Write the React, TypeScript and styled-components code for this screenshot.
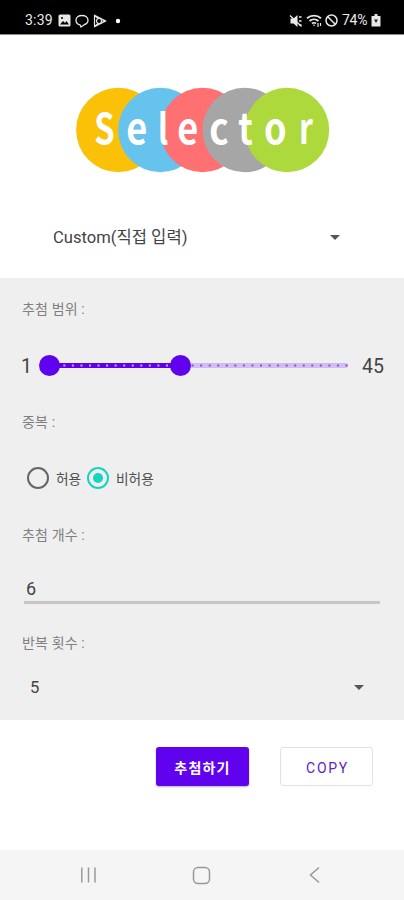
import React from "react";
import styled, { createGlobalStyle } from "styled-components";

const GlobalStyle = createGlobalStyle`
  * { box-sizing: border-box; }
  body { margin: 0; background: #fff; }
  button { font: inherit; }
`;

const Screen = styled.div`
  width: 404px;
  height: 900px;
  display: flex;
  flex-direction: column;
  background: #fff;
  color: #444;
  overflow: hidden;
  font-family: Roboto, "Noto Sans CJK KR", sans-serif;
`;

const StatusBar = styled.header`
  height: 35px;
  display: flex;
  justify-content: space-between;
  padding: 6px 23px 0 25px;
  background: #000;
  border-bottom: 1px solid #8a8a8a;
  color: #e8e8e8;
  font-size: 14px;
  font-weight: 400;
  line-height: 29px;
`;

const StatusGroup = styled.div<{ $gap: number }>`
  display: flex;
  align-items: center;
  gap: ${(p) => p.$gap}px;
  height: 29px;
  svg { display: block; }
`;

const Clock = styled.span`
  width: 29px;
  letter-spacing: 0.2px;
`;

const Battery = styled.span`
  width: 26px;
  margin-left: 1px;
  letter-spacing: -0.3px;
`;

const LogoArea = styled.div`
  height: 161px;
  display: flex;
  padding: 51px 0 0 74px;
`;

const Dropdown = styled.div<{ $height: number; $left: number; $right: number }>`
  height: ${(p) => p.$height}px;
  display: flex;
  align-items: center;
  justify-content: space-between;
  padding: 0 ${(p) => p.$right}px 0 ${(p) => p.$left}px;
  font-size: 16.6px;
`;

const DropdownText = styled.span<{ $lift?: number }>`
  padding-bottom: ${(p) => p.$lift ?? 0}px;
`;

const Caret = styled.span`
  border: 5px solid transparent;
  border-top-color: #555;
  border-bottom: 0;
`;

const Panel = styled.main`
  height: 442px;
  background: #efefef;
  display: flex;
  flex-direction: column;
`;

const Label = styled.div<{ $height: number }>`
  height: ${(p) => p.$height}px;
  padding: 0 0 2px 22px;
  display: flex;
  align-items: center;
  font-size: 14px;
  letter-spacing: 0.15px;
  color: #808080;
`;

const RangeRow = styled.div`
  height: 50px;
  display: flex;
  align-items: center;
  padding-left: 21px;
  font-size: 19.5px;
`;

const Bound = styled.span<{ $width: number }>`
  width: ${(p) => p.$width}px;
  padding-top: 2px;
`;

const Track = styled.div`
  position: relative;
  width: 300px;
  height: 5px;
  margin-right: 14px;
  border-radius: 2px;
  background: #d2bdf2;
`;

const Fill = styled.div`
  width: 132px;
  height: 5px;
  background: #6002e8;
  border-radius: 2px;
`;

const Ticks = styled.svg`
  position: absolute;
  left: 0;
  top: 0;
`;

const Thumb = styled.i`
  position: absolute;
  top: -8px;
  width: 21px;
  height: 21px;
  border-radius: 50%;
  background: #6002ee;
`;

const RadioRow = styled.div`
  height: 48px;
  display: flex;
  align-items: center;
  padding-left: 27px;
  font-size: 13.7px;
  color: #505050;
`;

const RadioDot = styled.span<{ $on?: boolean }>`
  width: 22px;
  height: 22px;
  border-radius: 50%;
  border: 2px solid ${(p) => (p.$on ? "#18d3bd" : "#666")};
  display: grid;
  place-items: center;
  &::after {
    content: "";
    width: 10px;
    height: 10px;
    border-radius: 50%;
    background: ${(p) => (p.$on ? "#18d3bd" : "transparent")};
  }
`;

const RadioText = styled.span<{ $width: number }>`
  width: ${(p) => p.$width}px;
  padding: 0 0 1px 7px;
  white-space: nowrap;
`;

const Field = styled.div`
  height: 28px;
  margin: 9px 24px 0 24px;
  padding: 0 0 0 2px;
  display: flex;
  align-items: center;
  border-bottom: 3px solid #c6c6c6;
  font-size: 18px;
`;

const Actions = styled.div`
  height: 130px;
  display: flex;
  justify-content: flex-end;
  gap: 31px;
  padding: 27px 31px 0 0;
`;

const ActionButton = styled.button<{ $filled?: boolean }>`
  width: 93px;
  height: 39px;
  padding: ${(p) => (p.$filled ? "0" : "2px 0 0 2px")};
  border-radius: 3px;
  font-size: 14px;
  font-weight: ${(p) => (p.$filled ? 700 : 400)};
  letter-spacing: ${(p) => (p.$filled ? 1.2 : 1.7)}px;
  border: ${(p) => (p.$filled ? "0" : "1px solid #e2e2e2")};
  background: ${(p) => (p.$filled ? "#6002ee" : "#fff")};
  color: ${(p) => (p.$filled ? "#fff" : "#6020cc")};
  box-shadow: ${(p) => (p.$filled ? "0 1px 2px rgba(0, 0, 0, 0.3)" : "none")};
`;

const NavBar = styled.nav`
  height: 50px;
  background: #f5f5f5;
  display: grid;
  grid-template-columns: 17px 19px 15px;
  column-gap: 95px;
  align-items: center;
  padding-left: 80px;
  svg { display: block; }
`;

const CIRCLES = [
  [118.3, "#fac108"],
  [160.3, "#66c3ee"],
  [202.5, "#ff7072"],
  [244.7, "#a6a6a6"],
  [287, "#add93d"],
] as const;

// glyph, centre x, horizontal scale
const LETTERS = [
  ["S", 104.5, 0.78],
  ["e", 136.8, 0.86],
  ["l", 163, 0.8],
  ["e", 187.8, 0.86],
  ["c", 219, 0.88],
  ["t", 245.6, 0.82],
  ["o", 275.2, 0.86],
  ["r", 306, 0.76],
] as const;

function Logo() {
  return (
    <svg width="258" height="88" viewBox="74 86 258 88" role="img" aria-label="Selector">
      {CIRCLES.map(([cx, fill]) => (
        <circle key={cx} cx={cx} cy="130" r="42.2" fill={fill} />
      ))}
      <g fill="#fff" fontFamily="Noto Sans CJK KR, sans-serif" fontWeight="700" fontSize="42" textAnchor="middle">
        {LETTERS.map(([ch, x, sx]) => (
          <text key={x} transform={`translate(${x} 143.5) scale(${sx} 1)`}>{ch}</text>
        ))}
      </g>
    </svg>
  );
}

function RangeSlider() {
  const ticks = Array.from({ length: 35 }, (_, i) => 6.8 + i * 8.55);
  return (
    <Track>
      <Fill />
      <Ticks width="300" height="5">
        {ticks.map((x) => (
          <rect key={x} x={x} y="1.5" width="2" height="2" fill={x < 132 ? "#c9a9f5" : "#8a50de"} />
        ))}
      </Ticks>
      <Thumb style={{ left: -9.5 }} />
      <Thumb style={{ left: 121.5 }} />
    </Track>
  );
}

export default function App() {
  return (
    <Screen>
      <GlobalStyle />
      <StatusBar>
        <StatusGroup $gap={4}>
          <Clock>3:39</Clock>
          <svg width="13" height="13" viewBox="0 0 13 13">
            <rect x=".5" y=".5" width="12" height="12" rx="1.5" fill="#e8e8e8" />
            <path d="M2 10.500 5 7l2 2 1.500-2L11 10.500z" fill="#000" />
            <circle cx="4" cy="4" r="1" fill="#000" />
          </svg>
          <svg width="14" height="14" viewBox="0 0 14 14" fill="none" stroke="#e8e8e8" strokeWidth="1.3">
            <path d="M5 10.800C2.500 10.400 1 8.600 1 6.300 1 3.500 3.500 1.500 7 1.500s6 2 6 4.800c0 2-1.500 3.700-3.500 4.200L6 13z" strokeLinejoin="round" />
          </svg>
          <svg width="14" height="14" viewBox="0 0 14 14" fill="none" stroke="#e8e8e8" strokeWidth="1.2" strokeLinejoin="round">
            <path d="M1.500 1.200 12.800 7 1.500 12.800zM1.500 1.200 5 4.600M1.500 12.800 5 9.400M8.500 7h4" />
            <circle cx="6" cy="7" r="2.500" />
          </svg>
          <svg width="14" height="6" viewBox="0 0 14 6"><circle cx="7" cy="3" r="2.200" fill="#fff" /></svg>
        </StatusGroup>
        <StatusGroup $gap={3}>
          <svg width="14" height="14" viewBox="0 0 14 14" stroke="#e8e8e8">
            <path d="M1.500 4.500h3L8.500 1v12l-4-3.500h-3z" fill="#e8e8e8" stroke="none" />
            <path d="M1 1.500 12.500 12.500" strokeWidth="1.300" />
            <path d="M10 3h2.500M10 7h2.500M10 11h2.500" strokeWidth="1.400" />
          </svg>
          <svg width="16" height="14" viewBox="0 0 16 14" fill="none" stroke="#e8e8e8" strokeWidth="1.900">
            <path d="M1 4.200c4-3.500 10-3.500 14 0M3.500 7c2.600-2.200 6.400-2.200 9 0M6 9.500c1-.9 3-.9 4 0" />
            <path d="M8 10.500v1.500M12 9v4M14.500 9v3" strokeWidth="1.200" />
          </svg>
          <svg width="13" height="13" viewBox="0 0 13 13" fill="none" stroke="#e8e8e8" strokeWidth="1.500">
            <circle cx="6.500" cy="6.500" r="5.500" />
            <path d="m2.800 2.800 7.400 7.400" />
          </svg>
          <Battery>74%</Battery>
          <svg width="10" height="13" viewBox="0 0 10 13">
            <path d="M3.500 0h3v2h3v10.500H.5V2h3z" fill="#e8e8e8" />
            <path d="M3 5.500h4L5 9z" fill="#222" />
          </svg>
        </StatusGroup>
      </StatusBar>

      <LogoArea>
        <Logo />
      </LogoArea>
      <Dropdown $height={82} $left={53} $right={64}>
        <DropdownText $lift={2}>Custom(직접 입력)</DropdownText>
        <Caret />
      </Dropdown>

      <Panel>
        <Label $height={62}>추첨 범위 :</Label>
        <RangeRow>
          <Bound $width={27}>1</Bound>
          <RangeSlider />
          <Bound $width={30}>45</Bound>
        </RangeRow>
        <Label $height={64}>중복 :</Label>
        <RadioRow>
          <RadioDot />
          <RadioText $width={38}>허용</RadioText>
          <RadioDot $on />
          <RadioText $width={60}>비허용</RadioText>
        </RadioRow>
        <Label $height={65}>추첨 개수 :</Label>
        <Field>6</Field>
        <Label $height={78}>반복 횟수 :</Label>
        <Dropdown $height={10} $left={30} $right={40}>
          <DropdownText>5</DropdownText>
          <Caret />
        </Dropdown>
      </Panel>

      <Actions>
        <ActionButton $filled>추첨하기</ActionButton>
        <ActionButton>COPY</ActionButton>
      </Actions>

      <NavBar>
        <svg width="17" height="18" viewBox="0 0 17 18" stroke="#999" strokeWidth="1.500">
          <path d="M1.800 1.500v15M8.500 1.500v15M15 1.500v15" />
        </svg>
        <svg width="19" height="19" viewBox="0 0 19 19" fill="none" stroke="#999" strokeWidth="1.500">
          <rect x="1.500" y="1.500" width="16" height="16" rx="4.500" />
        </svg>
        <svg width="15" height="18" viewBox="0 0 15 18" fill="none" stroke="#999" strokeWidth="1.500">
          <path d="m13 1.500-8.500 7.500 8.500 7.500" />
        </svg>
      </NavBar>
    </Screen>
  );
}
